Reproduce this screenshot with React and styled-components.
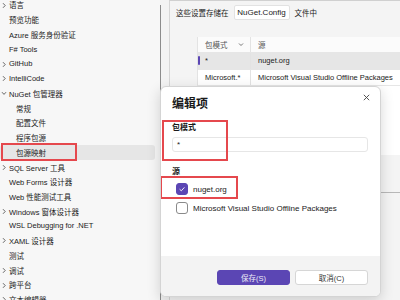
import React from 'react';
import styled, { createGlobalStyle } from 'styled-components';

const GlobalStyle = createGlobalStyle`
  html, body {
    margin: 0;
    padding: 0;
    width: 400px;
    height: 300px;
    overflow: hidden;
    background: #f3f3f3;
    font-family: "Liberation Sans", "Noto Sans CJK SC", sans-serif;
    font-size: 7.5px;
    color: #1b1b1b;
  }
`;

const Window = styled.div`
  position: relative;
  display: flex;
  width: 400px;
  height: 300px;
  overflow: hidden;
`;

const Sidebar = styled.div`
  width: 160px;
  flex-shrink: 0;
  background: #f7f7f7;
`;

const Tree = styled.ul`
  list-style: none;
  margin: -2.4px 0 0;
  padding: 0;
`;

const TreeRow = styled.li`
  position: relative;
  display: flex;
  align-items: center;
  height: 14.74px;
  width: 155px;
  padding-left: ${(p) => (p.$level === 2 ? 16 : 9)}px;
  box-sizing: border-box;
  border-radius: 3px;
  background: ${(p) => (p.$selected ? '#e6e6e6' : 'transparent')};
  white-space: nowrap;
`;

const Chevron = styled.svg`
  position: absolute;
  left: 1px;
  top: 4px;
`;

const Mark = styled.div`
  position: absolute;
  left: ${(p) => p.$x}px;
  top: ${(p) => p.$y}px;
  width: ${(p) => p.$w}px;
  height: ${(p) => p.$h}px;
  border: 2px solid #e5484d;
  box-sizing: border-box;
  pointer-events: none;
`;

const ScrollLine = styled.div`
  width: 1px;
  flex-shrink: 0;
  margin-top: 5px;
  background: #8c8c8c;
`;

const Panel = styled.div`
  flex: 1;
  margin-left: 8px;
  border-left: 1px solid #d6d6d6;
  border-top: 1px solid #d0d0d0;
  background: #f4f4f4;
  padding: 4px 0 0 6px;
  display: flex;
  flex-direction: column;
`;

const InfoRow = styled.div`
  display: flex;
  align-items: center;
  gap: 5px;
  height: 15px;
`;

const FileTag = styled.span`
  display: inline-flex;
  align-items: center;
  justify-content: center;
  width: 56px;
  height: 15px;
  background: #fff;
  border: 1px solid #e2e2e2;
  border-radius: 2px;
  box-sizing: border-box;
  font-size: 8px;
`;

const Table = styled.div`
  margin: 17px 0 0 21px;
  width: 215px;
  background: #fff;
  border-left: 1px solid #e3e3e3;
  height: 118px;
`;

const TRow = styled.div`
  position: relative;
  display: grid;
  grid-template-columns: 53px 1fr;
  height: ${(p) => (p.$head ? 15 : 15.5)}px;
  background: ${(p) => (p.$active ? '#e6e6e6' : p.$head ? '#fbfbfb' : '#fff')};
  border-bottom: 1px solid #e6e6e6;
  ${(p) =>
    p.$active &&
    `&::before {
      content: '';
      position: absolute;
      left: 0;
      top: 3px;
      width: 2px;
      height: 9px;
      background: #5b46b4;
      border-radius: 1px;
    }`}
`;

const Cell = styled.div`
  display: flex;
  align-items: center;
  justify-content: space-between;
  padding: 0 6px 0 7px;
  border-right: ${(p) => (p.$first ? '1px solid #e3e3e3' : 'none')};
  white-space: nowrap;
  overflow: hidden;
  color: ${(p) => (p.$head ? '#555' : '#1b1b1b')};
`;

const Splitter = styled.div`
  margin-top: 37px;
  height: 1px;
  background: #b8b8b8;
`;

const Dialog = styled.div`
  position: absolute;
  left: 160px;
  top: 86px;
  width: 221px;
  height: 211px;
  background: #fff;
  border: 1px solid #d4d4d4;
  border-radius: 6px;
  box-sizing: border-box;
  box-shadow: 0 4px 14px rgba(0, 0, 0, 0.16);
  display: flex;
  flex-direction: column;
  overflow: hidden;
`;

const Close = styled.svg`
  position: absolute;
  right: 10px;
  top: 7px;
`;

const DialogBody = styled.div`
  flex: 1;
  padding: 9px 12px 0 11px;
  display: flex;
  flex-direction: column;
`;

const Title = styled.div`
  font-size: 12px;
  line-height: 16px;
  font-weight: 700;
  color: #1a1a1a;
`;

const Label = styled.div`
  margin-top: ${(p) => p.$gap}px;
  font-size: 8px;
  line-height: 10px;
  font-weight: 700;
`;

const Input = styled.div`
  margin-top: 4px;
  height: 15px;
  background: #fff;
  border: 1px solid #e6e6e6;
  border-radius: 3px;
  box-sizing: border-box;
  display: flex;
  align-items: center;
  padding-left: 4px;
  font-size: 8px;
`;

const CheckRow = styled.div`
  margin-top: ${(p) => p.$gap}px;
  display: flex;
  align-items: center;
  gap: 5px;
  height: 14px;
  padding-left: 4px;
  font-size: 8px;
`;

const Box = styled.span`
  width: 12px;
  height: 12px;
  border-radius: 3px;
  box-sizing: border-box;
  display: flex;
  align-items: center;
  justify-content: center;
  background: ${(p) => (p.$checked ? '#5b46b4' : '#fff')};
  border: 1px solid ${(p) => (p.$checked ? '#5b46b4' : '#8a8a8a')};
`;

const Footer = styled.div`
  height: 40px;
  background: #f3f3f3;
  display: flex;
  justify-content: flex-end;
  gap: 5px;
  padding: 14px 12px 0 0;
  box-sizing: border-box;
`;

const Button = styled.button`
  width: 73px;
  height: 15px;
  padding: 0;
  border-radius: 3px;
  font-family: inherit;
  font-size: 7.5px;
  border: 1px solid ${(p) => (p.$primary ? '#5b46b4' : '#d6d6d6')};
  background: ${(p) => (p.$primary ? '#5b46b4' : '#fff')};
  color: ${(p) => (p.$primary ? '#ecebf7' : '#333')};
`;

const items = [
  { label: '语言', chevron: 'right' },
  { label: '预览功能' },
  { label: 'Azure 服务身份验证' },
  { label: 'F# Tools' },
  { label: 'GitHub', chevron: 'right' },
  { label: 'IntelliCode', chevron: 'right' },
  { label: 'NuGet 包管理器', chevron: 'down' },
  { label: '常规', level: 2 },
  { label: '配置文件', level: 2 },
  { label: '程序包源', level: 2 },
  { label: '包源映射', level: 2, selected: true },
  { label: 'SQL Server 工具', chevron: 'right' },
  { label: 'Web Forms 设计器' },
  { label: 'Web 性能测试工具' },
  { label: 'Windows 窗体设计器', chevron: 'right' },
  { label: 'WSL Debugging for .NET' },
  { label: 'XAML 设计器', chevron: 'right' },
  { label: '测试' },
  { label: '调试', chevron: 'right' },
  { label: '跨平台', chevron: 'right' },
  { label: '文本编辑器', chevron: 'right' },
];

const Arrow = ({ dir }) => (
  <Chevron width="6" height="7" viewBox="0 0 6 7">
    {dir === 'down' ? (
      <path d="M1 2.2 L3 4.4 L5 2.2" fill="none" stroke="#555" strokeWidth="0.9" />
    ) : (
      <path d="M2 1.2 L4.2 3.5 L2 5.8" fill="none" stroke="#555" strokeWidth="0.9" />
    )}
  </Chevron>
);

const SortIcon = () => (
  <svg width="6" height="5" viewBox="0 0 6 5">
    <path d="M1 1.5 L3 3.5 L5 1.5" fill="none" stroke="#666" strokeWidth="0.9" />
  </svg>
);

const App = () => {
  return (
    <>
      <GlobalStyle />
      <Window>
        <Sidebar>
          <Tree>
            {items.map((it) => (
              <TreeRow key={it.label} $level={it.level} $selected={it.selected}>
                {it.chevron && <Arrow dir={it.chevron} />}
                {it.label}
                {it.selected && <Mark $x={1} $y={-2} $w={76} $h={18} />}
              </TreeRow>
            ))}
          </Tree>
        </Sidebar>
        <ScrollLine />
        <Panel>
          <InfoRow>
            <span>这些设置存储在</span>
            <FileTag>NuGet.Config</FileTag>
            <span>文件中</span>
          </InfoRow>
          <Table>
            <TRow $head>
              <Cell $first $head>包模式<SortIcon /></Cell>
              <Cell $head>源<SortIcon /></Cell>
            </TRow>
            <TRow $active>
              <Cell $first>*</Cell>
              <Cell>nuget.org</Cell>
            </TRow>
            <TRow>
              <Cell $first>Microsoft.*</Cell>
              <Cell>Microsoft Visual Studio Offline Packages</Cell>
            </TRow>
          </Table>
          <Splitter />
        </Panel>

        <Dialog>
          <Close width="7" height="7" viewBox="0 0 7 7">
            <path d="M0.8 0.8 L6.2 6.2 M6.2 0.8 L0.8 6.2" stroke="#444" strokeWidth="0.9" />
          </Close>
          <DialogBody>
            <Title>编辑项</Title>
            <Label $gap={11}>包模式</Label>
            <Input>*</Input>
            <Label $gap={15}>源</Label>
            <CheckRow $gap={5}>
              <Box $checked>
                <svg width="8" height="8" viewBox="0 0 8 8">
                  <path d="M1.6 4.2 L3.3 5.8 L6.4 2.4" fill="none" stroke="#fff" strokeWidth="0.9" />
                </svg>
              </Box>
              nuget.org
            </CheckRow>
            <CheckRow $gap={5}>
              <Box />
              Microsoft Visual Studio Offline Packages
            </CheckRow>
          </DialogBody>
          <Footer>
            <Button $primary>保存(S)</Button>
            <Button>取消(C)</Button>
          </Footer>
          <Mark $x={1} $y={33} $w={66} $h={41} />
          <Mark $x={-1} $y={89} $w={78} $h={23} />
        </Dialog>
      </Window>
    </>
  );
};

export default App;
